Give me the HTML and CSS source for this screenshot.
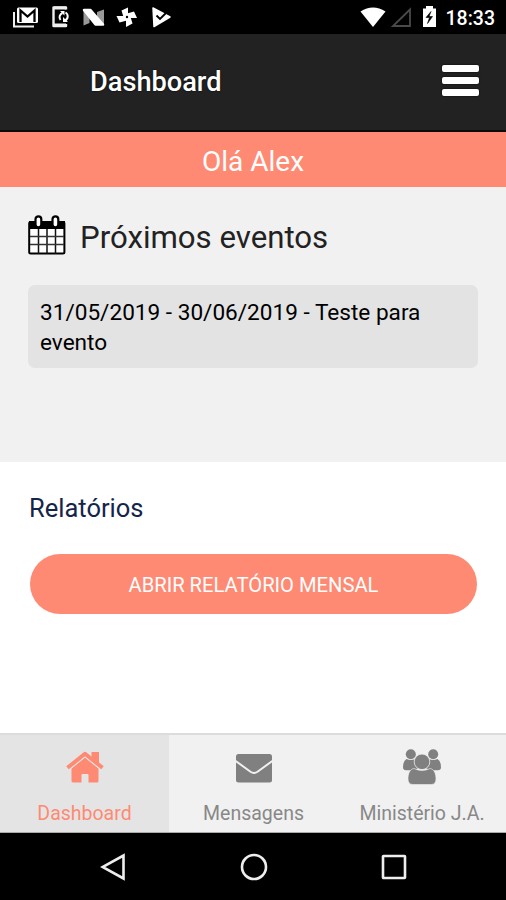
FILE: index.html
```html
<!DOCTYPE html>
<html lang="pt-BR">
<head>
  <meta charset="UTF-8" />
  <meta name="viewport" content="width=device-width, initial-scale=1.0"/>
  <title>Dashboard</title>
  <link rel="stylesheet" href="styles.css">
</head>
<body>

  <!-- Status bar -->
  <div class="status-bar">
    <svg class="status-left" width="180" height="34" viewBox="0 0 180 34">
      <!-- mail -->
      <path d="M14 12v14.500h20" fill="none" stroke="#eee" stroke-width="2"/>
      <rect x="17" y="7.500" width="21" height="15.500" rx="1.500" fill="#fff"/>
      <path d="M20.500 22v-11.500l7 6 7-6v11.500" fill="none" stroke="#000" stroke-width="2.300"/>
      <!-- phone sync -->
      <path d="M66 9.500V7.500H53.500V26H66v-2" fill="none" stroke="#eee" stroke-width="2.400" stroke-linejoin="round"/>
      <path d="M54 8h12M54 25h12" stroke="#eee" stroke-width="3"/>
      <path d="M60.500 20a4.500 4.500 0 0 1 2-7M65.500 12.500a4.500 4.500 0 0 1-.5 8" fill="none" stroke="#fff" stroke-width="2"/>
      <path d="M60 11h4.500v4.500zM68 22h-5v-5z" fill="#fff"/>
      <!-- nougat -->
      <path d="M83.500 10h6v13l-6 2.500zM97 12l7-2.500V24h-7z" fill="#999"/>
      <path d="M84 10h6.500L103 24.500h-7.500z" fill="#fff" stroke="#fff" stroke-width="2.500" stroke-linejoin="round"/>
      <!-- pinwheel -->
      <g fill="#fff">
        <path d="M128 17V7.500l-6.500 3 2 6.500z"/>
        <path d="M127 18h10l-3-6.500-7 2z"/>
        <path d="M126 17v10l6.500-3.500-2-6.500z"/>
        <path d="M127 16h-10.500l3 6.500 7.500-2z"/>
      </g>
      <circle cx="127" cy="17" r="1.200" fill="#000"/>
      <!-- play check -->
      <path d="M153 8l17 9-16 9.500z" fill="#fff" stroke="#fff" stroke-width="1.500" stroke-linejoin="round"/>
      <path d="M156.500 15.500l3.500 3.500 7.500-7.500" fill="none" stroke="#000" stroke-width="1.900"/>
    </svg>
    <div class="status-right">
      <svg width="82" height="34" viewBox="358 0 82 34">
        <path d="M360.500 11.500Q373 3.500 385.500 11.500L373 27z" fill="#fff"/>
        <path d="M393 26h17V9.500z" fill="none" stroke="#4a4a4a" stroke-width="1.800"/>
        <path d="M423 8.500h3V6h7v2.500h3V27h-13z" fill="#fff"/>
        <path d="M431 11.500l-5 6h3.500l-2 6 5-7h-3.500z" fill="#000" stroke="#000" stroke-width=".6"/>
      </svg>
      <span class="clock">18:33</span>
    </div>
  </div>

  <!-- Header -->
  <header class="header">
    <h1>Dashboard</h1>
    <button class="menu-btn" aria-label="Menu">
      <span></span>
      <span></span>
      <span></span>
    </button>
  </header>

  <div class="greeting">Olá Alex</div>

  <!-- Events -->
  <section class="events">
    <h2>
      <svg width="38" height="41" viewBox="0 0 38 41">
        <rect x="1.200" y="7" width="35.200" height="31.500" rx="1.500" fill="#fff" stroke="#000" stroke-width="2"/>
        <path d="M1 6h36v8H1z" fill="#000"/>
        <path d="M10.500 14v25M19 14v25M27.500 14v25" stroke="#111" stroke-width="1.500"/>
        <path d="M2 21.500h34M2 29.500h34" stroke="#333" stroke-width="1.300"/>
        <rect x="7.500" y="1.300" width="5.800" height="11" rx="2.900" fill="#fff" stroke="#000" stroke-width="2.200"/>
        <rect x="24.500" y="1.300" width="5.800" height="11" rx="2.900" fill="#fff" stroke="#000" stroke-width="2.200"/>
      </svg>
      <span>Próximos eventos</span>
    </h2>
    <div class="event">31/05/2019 - 30/06/2019 - Teste para evento</div>
  </section>

  <!-- Reports -->
  <section class="reports">
    <h3>Relatórios</h3>
    <button class="report-btn">ABRIR RELATÓRIO MENSAL</button>
  </section>

  <!-- Tabs -->
  <nav class="tabs">
    <a class="tab active">
      <svg width="40" height="38" viewBox="0 0 40 38">
        <path d="M26.500 3H34v13l-7.500-6z" fill="#ff8a73"/>
        <path d="M2.500 18.800L20 4.800l17.500 14" fill="none" stroke="#ff8a73" stroke-width="4" stroke-linejoin="round"/>
        <path d="M20 8.200L34 19.600V32q0 2-2 2h-9v-8.500h-6V34H8q-2 0-2-2V19.600z" fill="#ff8a73" stroke="#e4e4e4" stroke-width="1"/>
      </svg>
      <span>Dashboard</span>
    </a>
    <a class="tab">
      <svg width="40" height="38" viewBox="0 0 40 38">
        <rect x="2" y="5" width="36" height="28.500" rx="2.500" fill="#808080"/>
        <path d="M1 11.500l15.500 11.300q3.500 2.400 7 0L39 11.500" fill="none" stroke="#f1f1f1" stroke-width="2"/>
      </svg>
      <span>Mensagens</span>
    </a>
    <a class="tab">
      <svg width="40" height="38" viewBox="0 0 40 38" fill="#808080">
        <circle cx="8.800" cy="5.200" r="5"/>
        <circle cx="31.200" cy="5.200" r="5"/>
        <path d="M4.500 10q4.500 2.200 8.500 0 0 6 3 9.500-3.500.500-5.500 1.800H4q-3 0-3-3 0-6.500 3.500-8.300z"/>
        <path d="M35.500 10q-4.500 2.200-8.500 0 0 6-3 9.500 3.500.500 5.500 1.800H36q3 0 3-3 0-6.500-3.500-8.300z"/>
        <circle cx="20" cy="12.800" r="7.800" stroke="#f1f1f1" stroke-width=".8"/>
        <path d="M12 19.500q8 4 16 0c4.500.5 6 6 6 10.500q0 5.500-5 5.500H11q-5 0-5-5.500c0-4.500 1.500-10 6-10.500z" stroke="#f1f1f1" stroke-width=".6"/>
      </svg>
      <span>Ministério J.A.</span>
    </a>
  </nav>

  <!-- Android navigation -->
  <div class="android-nav">
    <svg width="28" height="28" viewBox="0 0 28 28">
      <path d="M23.500 2.500v23L2.500 14z"/>
    </svg>
    <svg width="28" height="28" viewBox="0 0 28 28">
      <circle cx="14" cy="14" r="12"/>
    </svg>
    <svg width="28" height="28" viewBox="0 0 28 28">
      <rect x="3" y="3" width="22" height="22" rx=".5"/>
    </svg>
  </div>

</body>
</html>
```

FILE: styles.css
```css
* {
  box-sizing: border-box;
}
body {
  margin: 0;
  height: 900px;
  display: flex;
  flex-direction: column;
  font-family: Roboto, "Liberation Sans", sans-serif;
  background-color: #fff;
}
svg {
  display: block;
  flex: none;
}
h1, h2, h3 {
  margin: 0;
  font-weight: 400;
}
button {
  border: none;
  font-family: inherit;
  cursor: pointer;
}
.status-bar {
  display: flex;
  justify-content: space-between;
  height: 34px;
  background-color: #000;
}
.status-right {
  display: flex;
  padding-right: 11px;
  gap: 6px;
}
.clock {
  font-size: 19.5px;
  font-weight: 500;
  line-height: 38px;
  color: #fff;
}
.header {
  display: flex;
  justify-content: space-between;
  align-items: center;
  height: 98px;
  padding: 0 27px 2px 90px;
  background-color: #222;
  border-bottom: 2px solid #0a0a0a;
}
.header h1 {
  padding-top: 2px;
  font-size: 27.2px;
  font-weight: 500;
  color: #fff;
  text-shadow: 0 0 2px #000;
}
.menu-btn {
  display: flex;
  flex-direction: column;
  gap: 5px;
  padding: 0 0 2px;
  background: none;
}
.menu-btn span {
  width: 37px;
  height: 7px;
  border-radius: 2px;
  background-color: #fff;
  box-shadow: 0 0 2px #000;
}
.greeting {
  height: 55px;
  line-height: 60px;
  font-size: 28px;
  text-align: center;
  color: #fff;
  background-color: #ff8a73;
}
.events {
  height: 275px;
  padding: 27px 28px 0;
  background-color: #f1f1f1;
}
.events h2 {
  display: flex;
  align-items: center;
  gap: 14px;
  height: 42px;
  font-size: 31.2px;
  color: #222;
}
.events h2 span {
  padding-top: 4px;
}
.event {
  height: 83px;
  margin-top: 29px;
  padding: 13px 12px 0;
  border-radius: 7px;
  font-size: 22.6px;
  line-height: 30px;
  color: #000;
  background-color: #e3e3e3;
}
.reports {
  flex: 1;
  padding: 31px 29px 0;
}
.reports h3 {
  font-size: 25.5px;
  line-height: 30px;
  color: #14254a;
}
.report-btn {
  display: block;
  width: 447px;
  height: 60px;
  margin: 31px 0 0 1px;
  padding-top: 3px;
  border-radius: 30px;
  font-size: 20.2px;
  color: #fff;
  background-color: #ff8a73;
}
.tabs {
  display: grid;
  grid-template-columns: 169px 169px 168px;
  height: 100px;
  border-top: 2px solid #dcdcdc;
  border-bottom: 1px solid #aaa;
  background-color: #f1f1f1;
}
.tab {
  display: flex;
  flex-direction: column;
  align-items: center;
  padding-top: 14px;
  gap: 15px;
  font-size: 19.5px;
  line-height: 24px;
  color: #888;
  white-space: nowrap;
}
.tab.active {
  color: #ff8a73;
  background-color: #e4e4e4;
}
.android-nav {
  display: flex;
  justify-content: center;
  align-items: center;
  gap: 112px;
  height: 67px;
  padding-left: 1px;
  background-color: #000;
}
.android-nav svg {
  fill: none;
  stroke: #eee;
  stroke-width: 2.6;
}
```
